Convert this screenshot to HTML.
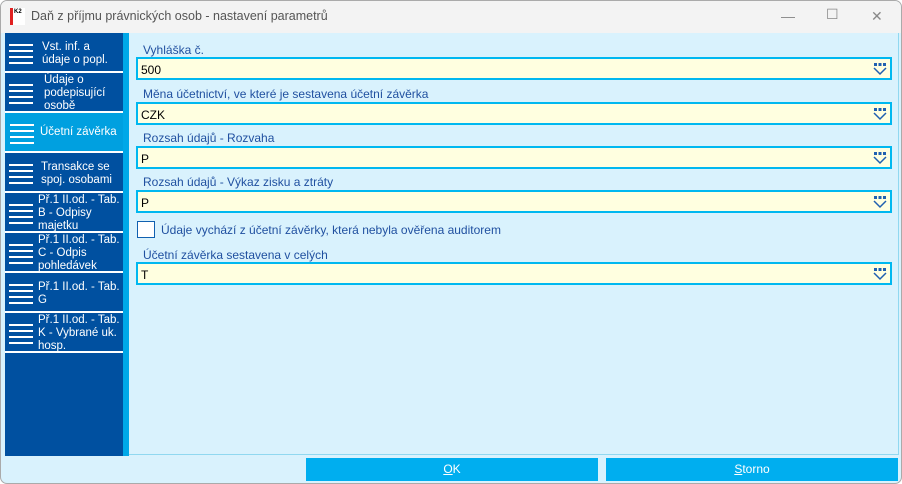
<!DOCTYPE html>
<html><head><meta charset="utf-8"><style>
*{margin:0;padding:0;box-sizing:border-box}
body{width:902px;height:484px;overflow:hidden;background:#fff;font-family:"Liberation Sans","DejaVu Sans",sans-serif;font-size:12px;position:relative}
.win{position:absolute;left:0;top:0;width:902px;height:484px;border:1px solid #aaa;border-radius:7px;background:#d9f2fd;overflow:hidden}
.title{position:absolute;left:0;top:0;width:902px;height:32px;background:#f3f3f3;color:#555;font-size:12.5px}
.title .t{position:absolute;left:30px;top:8px}
.logo{position:absolute;left:9px;top:7px;width:15px;height:17px;background:#fff;border-left:3px solid #e02020}
.logo span{position:absolute;left:1px;top:1px;font-size:6px;font-weight:bold;color:#000}
.ctl{position:absolute;top:7px;color:#888;font-size:14px;font-weight:300}
.side{position:absolute;left:4px;top:32px;width:118px;height:423px;background:#0050a0}
.strip{position:absolute;left:122px;top:32px;width:6px;height:423px;background:#00a8e8}
.item{position:absolute;left:0;width:118px;height:40px;border-bottom:2px solid #fff;color:#fff;font-size:11.5px;line-height:13px}
.item.sel{background:#00a0e0}
.item .ham{position:absolute;left:4px;top:11px;width:24px}
.ham i{display:block;height:2px;background:#fff;margin-bottom:4px}
.item .tx{position:absolute;left:37px}
.panel{position:absolute;left:128px;top:32px;width:770px;height:422px;border-right:1px solid #90d8f0;border-bottom:1px solid #90d8f0}
.lab{position:absolute;left:142px;color:#2050a0;font-size:12px}
.inp{position:absolute;left:135px;width:756px;height:23px;background:#ffffe0;border:2px solid #00b8f0;padding:4px 0 0 3px;color:#000;font-size:12px}
.dd{position:absolute;right:3px;top:3px;width:14px;height:14px}
.chk{position:absolute;left:136px;top:220px;width:18px;height:17px;background:#fff;border:1px solid #1060b0}
.btn{position:absolute;top:457px;height:23px;background:#00aeef;color:#fff;text-align:center;line-height:23px;font-size:12px}
</style></head><body><div class="win">
<div class="title"><div class="logo"><span>K2</span></div><div class="t">Daň z příjmu právnických osob - nastavení parametrů</div>
<div class="ctl" style="left:780px">—</div><div class="ctl" style="left:825px;top:5px">☐</div><div class="ctl" style="left:870px">✕</div></div>
<div class="side">
<div class="item" style="top:0"><div class="ham"><i></i><i></i><i></i><i></i></div><div class="tx" style="top:8px">Vst. inf. a<br>údaje o popl.</div></div>
<div class="item" style="top:40px"><div class="ham"><i></i><i></i><i></i><i></i></div><div class="tx" style="top:1px;left:39px">Údaje o<br>podepisující<br>osobě</div></div>
<div class="item sel" style="top:80px"><div class="ham" style="left:5px"><i></i><i></i><i></i><i></i></div><div class="tx" style="top:13px;left:35px">Účetní závěrka</div></div>
<div class="item" style="top:120px"><div class="ham"><i></i><i></i><i></i><i></i></div><div class="tx" style="top:8px;left:36px">Transakce se<br>spoj. osobami</div></div>
<div class="item" style="top:160px"><div class="ham"><i></i><i></i><i></i><i></i></div><div class="tx" style="top:1px;left:33px">Př.1 II.od. - Tab.<br>B - Odpisy<br>majetku</div></div>
<div class="item" style="top:200px"><div class="ham"><i></i><i></i><i></i><i></i></div><div class="tx" style="top:1px;left:33px">Př.1 II.od. - Tab.<br>C - Odpis<br>pohledávek</div></div>
<div class="item" style="top:240px"><div class="ham"><i></i><i></i><i></i><i></i></div><div class="tx" style="top:8px;left:33px">Př.1 II.od. - Tab.<br>G</div></div>
<div class="item" style="top:280px"><div class="ham"><i></i><i></i><i></i><i></i></div><div class="tx" style="top:1px;left:33px">Př.1 II.od. - Tab.<br>K - Vybrané uk.<br>hosp.</div></div>
</div>
<div class="strip"></div>
<div class="panel"></div>
<div class="lab" style="top:42px">Vyhláška č.</div>
<div class="inp" style="top:56px">500<svg class="dd" viewBox="0 0 14 14"><rect x="1" y="1" width="3" height="3" fill="#2060b0"/><rect x="5.5" y="1" width="3" height="3" fill="#2060b0"/><rect x="10" y="1" width="3" height="3" fill="#2060b0"/><path d="M1 6 L7 12 L13 6" fill="none" stroke="#2060b0" stroke-width="1.5"/></svg></div>
<div class="lab" style="top:86px">Měna účetnictví, ve které je sestavena účetní závěrka</div>
<div class="inp" style="top:101px">CZK<svg class="dd" viewBox="0 0 14 14"><rect x="1" y="1" width="3" height="3" fill="#2060b0"/><rect x="5.5" y="1" width="3" height="3" fill="#2060b0"/><rect x="10" y="1" width="3" height="3" fill="#2060b0"/><path d="M1 6 L7 12 L13 6" fill="none" stroke="#2060b0" stroke-width="1.5"/></svg></div>
<div class="lab" style="top:130px">Rozsah údajů - Rozvaha</div>
<div class="inp" style="top:145px">P<svg class="dd" viewBox="0 0 14 14"><rect x="1" y="1" width="3" height="3" fill="#2060b0"/><rect x="5.5" y="1" width="3" height="3" fill="#2060b0"/><rect x="10" y="1" width="3" height="3" fill="#2060b0"/><path d="M1 6 L7 12 L13 6" fill="none" stroke="#2060b0" stroke-width="1.5"/></svg></div>
<div class="lab" style="top:174px">Rozsah údajů - Výkaz zisku a ztráty</div>
<div class="inp" style="top:189px">P<svg class="dd" viewBox="0 0 14 14"><rect x="1" y="1" width="3" height="3" fill="#2060b0"/><rect x="5.5" y="1" width="3" height="3" fill="#2060b0"/><rect x="10" y="1" width="3" height="3" fill="#2060b0"/><path d="M1 6 L7 12 L13 6" fill="none" stroke="#2060b0" stroke-width="1.5"/></svg></div>
<div class="chk"></div>
<div class="lab" style="top:222px;left:160px">Údaje vychází z účetní závěrky, která nebyla ověřena auditorem</div>
<div class="lab" style="top:247px">Účetní závěrka sestavena v celých</div>
<div class="inp" style="top:261px">T<svg class="dd" viewBox="0 0 14 14"><rect x="1" y="1" width="3" height="3" fill="#2060b0"/><rect x="5.5" y="1" width="3" height="3" fill="#2060b0"/><rect x="10" y="1" width="3" height="3" fill="#2060b0"/><path d="M1 6 L7 12 L13 6" fill="none" stroke="#2060b0" stroke-width="1.5"/></svg></div>
<div class="btn" style="left:305px;width:292px"><u>O</u>K</div>
<div class="btn" style="left:605px;width:292px"><u>S</u>torno</div>
</div></body></html>
